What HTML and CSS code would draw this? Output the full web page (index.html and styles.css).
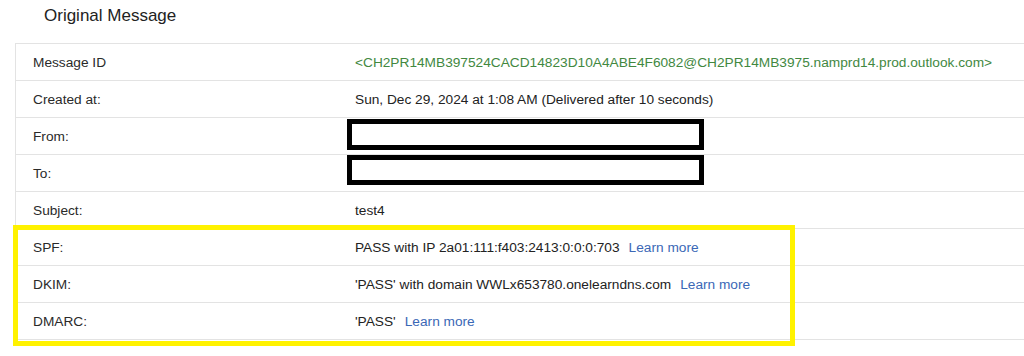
FILE: index.html
```html
<!DOCTYPE html>
<html lang="en">
<head>
<meta charset="utf-8">
<title>Original Message</title>
<link rel="stylesheet" href="styles.css">
</head>
<body>
<div class="page">
  <h1 class="title">Original Message</h1>
  <div class="table">
    <div class="row"><div class="label">Message ID</div><div class="value msgid">&lt;CH2PR14MB397524CACD14823D10A4ABE4F6082@CH2PR14MB3975.namprd14.prod.outlook.com&gt;</div></div>
    <div class="row"><div class="label">Created at:</div><div class="value">Sun, Dec 29, 2024 at 1:08 AM (Delivered after 10 seconds)</div></div>
    <div class="row"><div class="label">From:</div><div class="value"><div class="redact redact-from"></div></div></div>
    <div class="row"><div class="label">To:</div><div class="value"><div class="redact redact-to"></div></div></div>
    <div class="row"><div class="label">Subject:</div><div class="value">test4</div></div>
    <div class="row"><div class="label">SPF:</div><div class="value">PASS with IP 2a01:111:f403:2413:0:0:0:703<a class="learn" href="#">Learn more</a></div></div>
    <div class="row"><div class="label">DKIM:</div><div class="value">'PASS' with domain WWLx653780.onelearndns.com<a class="learn" href="#">Learn more</a></div></div>
    <div class="row"><div class="label">DMARC:</div><div class="value">'PASS'<a class="learn" href="#">Learn more</a></div></div>
    <div class="highlight"></div>
  </div>
</div>
</body>
</html>
```

FILE: styles.css
```css
html, body {
  margin: 0;
  padding: 0;
  background: #ffffff;
}

body {
  font-family: "Liberation Sans", Arial, sans-serif;
  color: #222222;
  width: 1024px;
  height: 356px;
  overflow: hidden;
}

.page {
  display: flex;
  flex-direction: column;
}

.title {
  margin: 0;
  height: 43px;
  box-sizing: border-box;
  padding: 6px 0 0 44px;
  font-size: 17px;
  line-height: 20px;
  font-weight: normal;
  color: #222222;
}

.table {
  position: relative;
  margin-left: 15px;
  width: 1030px;
  border-left: 1px solid #e3e3e3;
  border-top: 1px solid #e3e3e3;
  display: flex;
  flex-direction: column;
}

.row {
  display: grid;
  grid-template-columns: 322px 1fr;
  height: 37px;
  box-sizing: border-box;
  border-bottom: 1px solid #e3e3e3;
  align-items: center;
  font-size: 13.7px;
}

.label {
  padding-left: 17px;
  color: #2a2a2a;
}

.value {
  padding-left: 17px;
  color: #222222;
  white-space: nowrap;
  display: flex;
  align-items: center;
}

.msgid {
  color: #42883f;
}

.learn {
  color: #3b68b6;
  text-decoration: none;
  margin-left: 9px;
}

.redact {
  box-sizing: border-box;
  border: 5px solid #000000;
  background: #ffffff;
  width: 357px;
  margin-left: -8px;
}

.redact-from {
  height: 31px;
  margin-top: -3px;
}

.redact-to {
  height: 30px;
  margin-top: -6px;
}

.highlight {
  position: absolute;
  left: -3px;
  top: 181px;
  width: 782px;
  height: 121px;
  box-sizing: border-box;
  border: 5px solid #fff200;
  pointer-events: none;
}
```
